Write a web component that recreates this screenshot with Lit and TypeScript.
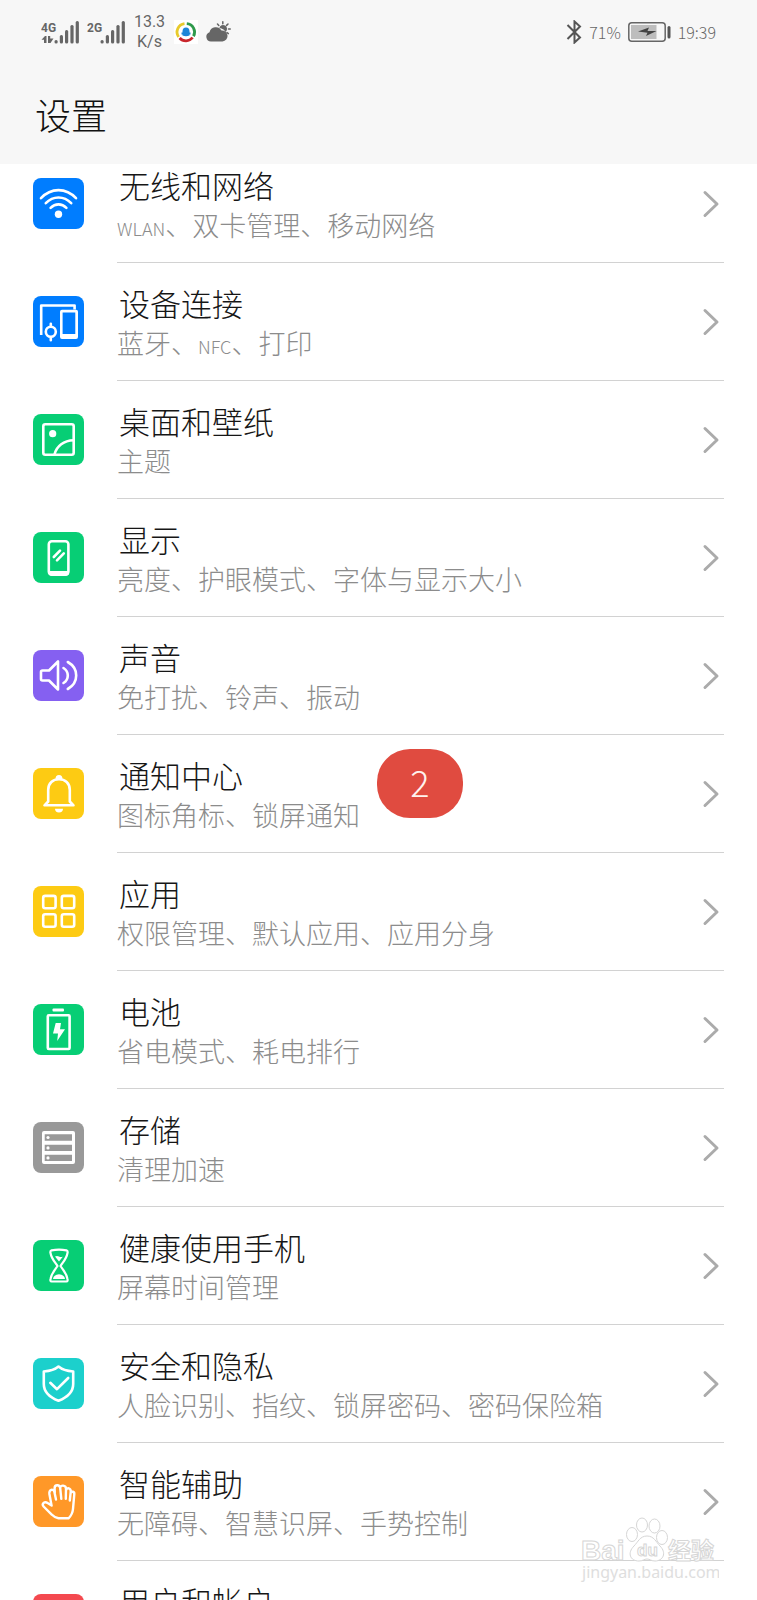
import { LitElement, html, svg, css, nothing } from "lit";
import { customElement, property } from "lit/decorators.js";

type Entry = {
  id: string;
  title: string;
  detail: string;
  color: string;
  badge?: string;
};

const entries: Entry[] = [
  { id: "wireless", title: "无线和网络", detail: "WLAN、双卡管理、移动网络", color: "#007dff" },
  { id: "devices", title: "设备连接", detail: "蓝牙、NFC、打印", color: "#007dff" },
  { id: "wallpaper", title: "桌面和壁纸", detail: "主题", color: "#07ce75" },
  { id: "display", title: "显示", detail: "亮度、护眼模式、字体与显示大小", color: "#07ce75" },
  { id: "sound", title: "声音", detail: "免打扰、铃声、振动", color: "#8560f1" },
  { id: "notice", title: "通知中心", detail: "图标角标、锁屏通知", color: "#fdcb13", badge: "2" },
  { id: "apps", title: "应用", detail: "权限管理、默认应用、应用分身", color: "#fdcb13" },
  { id: "battery", title: "电池", detail: "省电模式、耗电排行", color: "#07ce75" },
  { id: "storage", title: "存储", detail: "清理加速", color: "#999999" },
  { id: "balance", title: "健康使用手机", detail: "屏幕时间管理", color: "#07ce75" },
  { id: "security", title: "安全和隐私", detail: "人脸识别、指纹、锁屏密码、密码保险箱", color: "#1cd0cc" },
  { id: "assist", title: "智能辅助", detail: "无障碍、智慧识屏、手势控制", color: "#ff9828" },
  { id: "accounts", title: "用户和帐户", detail: "", color: "#f4494f" },
];

const glyphs: Record<string, unknown> = {
  wireless: svg`
    <path d="M8 20.2C18 9.400 33 9.400 43 20.200M12.800 25.200C20 17.600 31 17.600 38.200 25.200M17.600 29.800C22.200 25.200 28.800 25.200 33.400 29.800"/>
    <circle class="solid" cx="25.500" cy="36.300" r="3.700"/>`,
  devices: svg`
    <path d="M8.200 39V9.500H41.600V13.500" stroke-linecap="butt"/>
    <path class="solid" fill-rule="evenodd" d="M29 13.700H43a2 2 0 0 1 2 2V41a2 2 0 0 1-2 2H29a2 2 0 0 1-2-2V15.700a2 2 0 0 1 2-2ZM29.600 16.500V38H42.300V16.500Z"/>
    <circle cx="17.800" cy="35.800" r="5"/>
    <path d="M17.800 27.800V30M17.800 41.500V44.300"/>`,
  wallpaper: svg`
    <rect x="10.300" y="10.300" width="30.400" height="30.400" rx="2"/>
    <circle class="solid" cx="19.700" cy="19.700" r="3.600"/>
    <path d="M21.500 40.500C23.500 32 31 26.500 40.500 26.200"/>`,
  display: svg`
    <rect x="15.800" y="9.200" width="19.600" height="33.400" rx="3"/>
    <path class="solid" d="M15.500 39H36V41.500q0 2-2.500 2H18q-2.500 0-2.500-2Z"/>
    <path d="M20.800 25L27 18.600M24 28.400L30.800 21.400"/>`,
  sound: svg`
    <path d="M9.500 20.500H16L25 11.500V39.500L16 30.500H9.500a1.500 1.500 0 0 1-1.500-1.500V22a1.500 1.500 0 0 1 1.500-1.500Z"/>
    <path d="M30.500 18C36.200 21.600 36.200 29.400 30.500 33M34.800 12C46 18.400 46 32.600 34.800 39"/>`,
  notice: svg`
    <path d="M11.500 37.300H40.500L36.800 33.500V22C36.800 15 32 11.300 26 11.300S15.200 15 15.200 22V33.500Z"/>
    <path class="solid" d="M22.500 11a3.500 4 0 0 1 7 0ZM22 40.800H30a4 3.600 0 0 1-8 0Z"/>`,
  apps: svg`
    <rect x="10.200" y="9.900" width="12.400" height="12.400" rx="2"/>
    <rect x="28.800" y="9.900" width="12.400" height="12.400" rx="2"/>
    <rect x="10.200" y="28.300" width="12.400" height="12.400" rx="2"/>
    <rect x="28.800" y="28.300" width="12.400" height="12.400" rx="2"/>`,
  battery: svg`
    <rect class="solid" x="19.500" y="4.600" width="11.500" height="3" rx="1"/>
    <rect x="14.800" y="11.200" width="21.800" height="33.800" rx="1"/>
    <path class="solid" d="M22.700 19H28L27 25.200H32L24.200 37L25 29.400H20Z"/>`,
  storage: svg`
    <path class="solid" fill-rule="evenodd" d="M11 9H40a2 2 0 0 1 2 2V40a2 2 0 0 1-2 2H11a2 2 0 0 1-2-2V11a2 2 0 0 1 2-2ZM11.700 12.300V18.700H39V12.300ZM11.700 22.700V29H39V22.700ZM11.700 32.700V39H39V32.700Z"/>
    <circle class="solid" cx="15" cy="15.500" r="1.600"/>
    <circle class="solid" cx="15" cy="25.900" r="1.600"/>
    <circle class="solid" cx="15" cy="35.900" r="1.600"/>`,
  balance: svg`
    <path d="M18.500 10.300Q26 8.800 33.500 10.300Q35 10.700 34.500 13C33.500 19 30 22 27.500 26C30 30 33.500 33 34.500 39Q35 41.500 33.500 41.500H18.500Q17 41.500 17.500 39C18.500 33 22 30 24.500 26C22 22 18.500 19 17.500 13Q17 10.700 18.500 10.300Z" stroke-width="2.200"/>
    <path class="solid" d="M22 16.500Q24 15.500 26 16.500Q28 17.500 30 16.500L26 21.500ZM20 39Q20.500 34.800 26 34.300Q31.500 34.800 32 39Z"/>`,
  security: svg`
    <path d="M25.500 8.500C29 11.500 34 13 40.200 13.500V26C40.200 34 34 39.500 25.500 42.800C17 39.500 10.800 34 10.800 26V13.500C17 13 22 11.500 25.500 8.500Z"/>
    <path d="M17.300 24.800L24 31.200L35.200 20"/>`,
  assist: svg`
    <path d="M18.600 29.600L16.400 18C15.800 13.200 20.300 12.200 21.400 16L23 23.500M21.800 16.500L21.600 12.200C21.600 8.300 26.800 8.300 27.200 12L28.300 22.800M27.200 12C27.200 8.600 33 8.800 33 12.800L32.800 22.800M33 14.500C33.800 10.800 38.200 12 37.700 16L36.800 24.500M37.600 17C38.500 14.800 41.600 15.500 41.300 18.200L40 33Q39.500 38.500 35.500 42.300H25.500Q21.500 41.500 19 38.800L10.600 30.500C8.300 27.800 11.600 24.900 14.600 27L18.600 29.600" stroke-width="2.400"/>`,
  accounts: svg`
    <circle cx="25.500" cy="19" r="7"/>
    <path d="M11 41C12 33 18 30 25.500 30S39 33 40 41Z"/>`,
};

@customElement("settings-row")
class SettingsRow extends LitElement {
  @property({ attribute: false }) entry!: Entry;

  static styles = css`
    :host { display: block; }
    .row {
      position: relative;
      display: flex;
      gap: 33px;
      height: 118px;
      padding: 0 33px;
      color: inherit;
      text-decoration: none;
    }
    .icon { flex: none; align-self: center; width: 51px; height: 51px; margin-bottom: 2px; }
    .glyph { fill: none; stroke: #fff; stroke-width: 2.600; stroke-linecap: round; stroke-linejoin: round; }
    .glyph .solid { fill: #fff; stroke: none; }
    .body {
      flex: 1;
      min-width: 0;
      display: flex;
      align-items: center;
      padding-right: 4px;
      border-bottom: 1px solid #d2d2d2;
    }
    .text { flex: 1; min-width: 0; padding-top: 2px; white-space: nowrap; }
    .title, .detail { display: block; height: 40px; line-height: 40px; }
    .title { padding-left: 2px; font-size: 31px; color: #161616; }
    .detail { font-size: 27px; color: #8c8c8c; }
    .latin { font-size: 18px; }
    .chevron { flex: none; width: 18px; height: 30px; fill: none; stroke: #ababab; stroke-width: 3; stroke-linecap: round; stroke-linejoin: round; }
    .badge {
      position: absolute;
      top: 14px;
      left: 377px;
      width: 86px;
      height: 69px;
      line-height: 64px;
      border-radius: 33px;
      background: #e04b40;
      color: #fff3ee;
      font-size: 36px;
      text-align: center;
    }
  `;

  render() {
    const e = this.entry;
    const parts = e.detail.split(/([A-Za-z]+)/);
    return html`
      <a class="row" href="#${e.id}">
        <svg class="icon" viewBox="0 0 51 51" aria-hidden="true">
          <rect width="51" height="51" rx="8" fill=${e.color}></rect>
          <g class="glyph">${glyphs[e.id]}</g>
        </svg>
        <span class="body">
          <span class="text">
            <span class="title">${e.title}</span>
            <span class="detail">${parts.map((p, i) => (i % 2 ? html`<span class="latin">${p}</span>` : p))}</span>
          </span>
          <svg class="chevron" viewBox="0 0 18 30" aria-hidden="true"><path d="M3 3.500L15 15L3 26.500"/></svg>
        </span>
        ${e.badge ? html`<span class="badge">${e.badge}</span>` : nothing}
      </a>`;
  }
}

@customElement("status-bar")
class StatusBar extends LitElement {
  static styles = css`
    :host {
      display: flex;
      align-items: center;
      justify-content: space-between;
      height: 64px;
      padding: 0 41px;
      color: #666;
      font-size: 16px;
    }
    .group { display: flex; align-items: center; }
    .left { gap: 8px; }
    .right { gap: 7px; }
    .mark { display: block; flex: none; }
    .net { font: 700 12px Roboto, sans-serif; }
    .speed { width: 33px; font: 16px/20px Roboto, sans-serif; text-align: center; }
  `;

  signal(label: string, arrows: boolean) {
    return html`
      <svg class="mark" width="38" height="24" viewBox="0 0 38 24" fill="#666">
        <text class="net" x="0" y="12">${label}</text>
        ${arrows
          ? svg`<path d="M3 23V19.800H0.500L4 16H5.500V23ZM7 16H9.200V18.500H12.500L9.500 23H7Z"/>`
          : nothing}
        <rect x="13.500" y="20" width="3.200" height="3.500" rx="1.500"/>
        <rect x="18.800" y="15" width="3.200" height="8.500" rx="1.500"/>
        <rect x="24" y="10" width="3.200" height="13.500" rx="1.500"/>
        <rect x="29.400" y="5" width="3.200" height="18.500" rx="1.500"/>
        <rect x="34.700" y="1" width="3.200" height="22.500" rx="1.500"/>
      </svg>`;
  }

  render() {
    return html`
      <div class="group left">
        ${this.signal("4G", true)}
        ${this.signal("2G", false)}
        <span class="speed">13.3 K/s</span>
        <svg class="mark" width="24" height="24" viewBox="0 0 24 24">
          <rect width="24" height="24" fill="#fff"/>
          <g fill="none" stroke-width="2.800">
            <path d="M4.600 17A8.500 8.500 0 0 1 10.500 3.700" stroke="#e8ca2c"/>
            <path d="M12.800 3.600A8.500 8.500 0 0 1 19.500 16.200" stroke="#2f9a4c"/>
            <path d="M18.600 17.500A8.500 8.500 0 0 1 5.600 18" stroke="#c9262c"/>
          </g>
          <path d="M8.500 15.500V11.500Q8.500 7.600 12 7.600T15.500 11.500V15.500Q12 16.800 8.500 15.500Z" fill="#1c86d8"/>
          <path d="M7.500 12.500H16.500V14.500H7.500Z" fill="#1c86d8"/>
        </svg>
        <svg class="mark" width="25" height="22" viewBox="0 0 25 22" fill="#666">
          <path d="M5 20.500A4.800 4.800 0 0 1 3.500 11.200A6.500 6.500 0 0 1 15.500 9.500A5.500 5.500 0 0 1 16.500 20.500Z"/>
          <path d="M13.300 7.300A3.900 3.900 0 1 1 19.500 11Q18.300 8.200 15.500 7.600Q14.500 7 13.300 7.300Z"/>
          <path d="M16.800 0.800V2.800M11.500 3L12.800 4.400M22 3L20.600 4.400M22.500 8H24.300M21 11.500L22.300 12.600" stroke="#666" stroke-width="1.500" stroke-linecap="round"/>
        </svg>
      </div>
      <div class="group right">
        <svg class="mark" width="16" height="24" viewBox="0 0 16 24" fill="none" stroke="#555" stroke-width="2">
          <path d="M1.500 5L14 17.500L8.500 22.500V1.500L14 6.500L1.500 19"/>
        </svg>
        <span>71%</span>
        <svg class="mark" width="43" height="20" viewBox="0 0 43 20">
          <rect x="0.800" y="0.800" width="36.400" height="18.400" rx="3" fill="none" stroke="#666" stroke-width="1.500"/>
          <rect x="3" y="3" width="25.500" height="14" fill="#bdbdbd"/>
          <path d="M10 9.500L21 5.500L19.500 9H28.500L18 14L19.500 10.800Z" fill="#444"/>
          <rect x="39.500" y="4" width="3" height="12.500" rx="1.500" fill="#555"/>
        </svg>
        <span>19:39</span>
      </div>`;
  }
}

@customElement("app-root")
class AppRoot extends LitElement {
  static styles = css`
    :host {
      position: relative;
      display: flex;
      flex-direction: column;
      height: 100vh;
      overflow: hidden;
      background: #fff;
      font-family: "Noto Sans CJK SC", sans-serif;
      font-weight: 300;
    }
    .header { flex: none; background: #f7f7f7; }
    .heading {
      margin: 0;
      padding: 0 35px;
      line-height: 100px;
      font-size: 36px;
      font-weight: 300;
      color: #111;
    }
    .viewport { flex: 1; min-height: 0; overflow: hidden; }
    .list { margin: -19px 0 0; padding: 0; list-style: none; }
    .watermark { position: absolute; right: 38px; bottom: 12px; width: 140px; height: 76px; fill: #fff; stroke: #d6d6d6; stroke-width: 1; }
    .brand { font: 700 28px "Liberation Sans", sans-serif; }
    .du { font: 700 17px "Liberation Sans", sans-serif; }
    .brand-cn { font: 700 23px "Noto Sans CJK SC", sans-serif; }
    .site { font: 16px "Noto Sans", sans-serif; fill: #dedede; stroke: none; }
  `;

  render() {
    return html`
      <header class="header">
        <status-bar></status-bar>
        <h1 class="heading">设置</h1>
      </header>
      <main class="viewport">
        <ul class="list">
          ${entries.map((e) => html`<li><settings-row .entry=${e}></settings-row></li>`)}
        </ul>
      </main>
      <svg class="watermark" viewBox="0 0 140 76">
        <text class="brand" x="2" y="48">Bai</text>
        <ellipse cx="53" cy="22.500" rx="5.500" ry="7"/>
        <ellipse cx="63" cy="13" rx="5.500" ry="7"/>
        <ellipse cx="75.500" cy="14" rx="5.500" ry="7"/>
        <ellipse cx="83" cy="25.500" rx="5.500" ry="7"/>
        <path d="M68 24C75 24 77 30 81 34C88 41 84 49 76 49C72 49 71 47 68 47S64 49 60 49C51 49 48 41 55 34C59 30 61 24 68 24Z"/>
        <text class="du" x="58" y="44">du</text>
        <text class="brand-cn" x="89" y="47">经验</text>
        <text class="site" x="3" y="66">jingyan.baidu.com</text>
      </svg>`;
  }
}
